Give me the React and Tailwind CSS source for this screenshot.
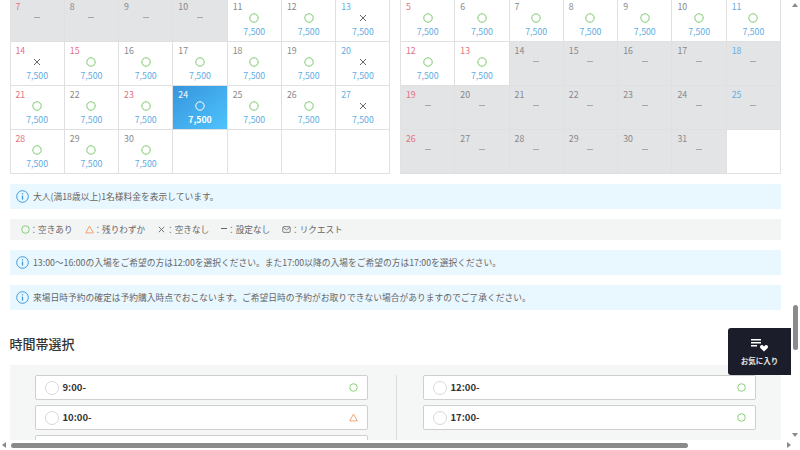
import React from 'react';

const jp = "font-['Noto_Sans_CJK_JP','Noto_Sans',sans-serif]";

const Circle = ({ color = '#7ccb6b', size = 10 }) => (
  <svg width={size} height={size} viewBox="0 0 10 10" fill="none" stroke={color} strokeWidth="1">
    <circle cx="5" cy="5" r="4.2" />
  </svg>
);

const Cross = ({ color = '#666', size = 10 }) => (
  <svg width={size} height={size} viewBox="0 0 10 10" fill="none" stroke={color} strokeWidth="1">
    <path d="M2 2l6 6M8 2l-6 6" />
  </svg>
);

const Dash = ({ color = '#a8a8ab', width = 6 }) => (
  <svg width={width} height="10" viewBox={`0 0 ${width} 10`} stroke={color} strokeWidth="1">
    <path d={`M0 4.5h${width}`} />
  </svg>
);

const Triangle = ({ color = '#ee9a66', size = 10 }) => (
  <svg width={size} height={size} viewBox="0 0 10 10" fill="none" stroke={color} strokeWidth="1">
    <path d="M5 1.2L9.2 8.8H.8z" />
  </svg>
);

const Mail = () => (
  <svg width="9" height="9" viewBox="0 0 11 10" fill="none" stroke="#666" strokeWidth="1">
    <rect x="1" y="1.5" width="9" height="7" rx="1" />
    <path d="M1.5 2.5l4 3 4-3" />
  </svg>
);

const Info = () => (
  <svg width="13" height="13" viewBox="0 0 13 13" fill="none" stroke="#3b9be0" strokeWidth="1" className="shrink-0">
    <circle cx="6.5" cy="6.5" r="5.8" />
    <path d="M6.5 5.6v4" strokeWidth="1.3" />
    <path d="M6.5 3.2v1.2" strokeWidth="1.3" />
  </svg>
);

const colorOf = { r: 'text-[#e5707f]', g: 'text-[#87878a]', b: 'text-[#62ade4]' };

const cell = (d, tone, kind) => ({ d, tone, kind });

const left = [
  cell(7, 'r', '-'), cell(8, 'g', '-'), cell(9, 'g', '-'), cell(10, 'g', '-'), cell(11, 'g', 'o'), cell(12, 'g', 'o'), cell(13, 'b', 'x'),
  cell(14, 'r', 'x'), cell(15, 'r', 'o'), cell(16, 'g', 'o'), cell(17, 'g', 'o'), cell(18, 'g', 'o'), cell(19, 'g', 'o'), cell(20, 'b', 'x'),
  cell(21, 'r', 'o'), cell(22, 'g', 'o'), cell(23, 'r', 'o'), cell(24, 'g', 's'), cell(25, 'g', 'o'), cell(26, 'g', 'o'), cell(27, 'b', 'x'),
  cell(28, 'r', 'o'), cell(29, 'g', 'o'), cell(30, 'g', 'o'), null, null, null, null,
];

const right = [
  cell(5, 'r', 'o'), cell(6, 'g', 'o'), cell(7, 'g', 'o'), cell(8, 'g', 'o'), cell(9, 'g', 'o'), cell(10, 'g', 'o'), cell(11, 'b', 'o'),
  cell(12, 'r', 'o'), cell(13, 'r', 'o'), cell(14, 'g', '-'), cell(15, 'g', '-'), cell(16, 'g', '-'), cell(17, 'g', '-'), cell(18, 'b', '-'),
  cell(19, 'r', '-'), cell(20, 'g', '-'), cell(21, 'g', '-'), cell(22, 'g', '-'), cell(23, 'g', '-'), cell(24, 'g', '-'), cell(25, 'b', '-'),
  cell(26, 'r', '-'), cell(27, 'g', '-'), cell(28, 'g', '-'), cell(29, 'g', '-'), cell(30, 'g', '-'), cell(31, 'g', '-'), null,
];

const DayCell = ({ item }) => {
  if (!item) return <div className="h-[44px] border-r border-b border-[#e2e2e2] bg-white" />;
  const { d, tone, kind } = item;
  const selected = kind === 's';
  const off = kind === '-';
  return (
    <div
      className={`h-[44px] border-r border-b border-[#e0e0e2] flex flex-col pt-[2px] ${
        selected ? 'bg-linear-to-br from-[#3795dc] to-[#4ec3fd]' : off ? 'bg-[#e3e4e6]' : 'bg-white'
      }`}
    >
      <div className={`h-[13px] pl-[5px] text-[8.75px] leading-[13px] ${selected ? 'text-white' : colorOf[tone]}`}>{d}</div>
      <div className="h-[10px] flex justify-center">
        {kind === 'o' && <Circle />}
        {kind === 's' && <Circle color="#fff" />}
        {kind === 'x' && <Cross />}
        {kind === '-' && <Dash />}
      </div>
      {!off && (
        <div className={`mt-[3px] h-[12px] text-center text-[8.75px] leading-[12px] ${selected ? 'text-white font-bold' : 'text-[#62ade4]'}`}>
          7,500
        </div>
      )}
    </div>
  );
};

const Calendar = ({ days }) => (
  <div className="w-[381px] grid grid-cols-7 border-l border-[#e2e2e2]">
    {days.map((item, i) => (
      <DayCell key={i} item={item} />
    ))}
  </div>
);

const Notice = ({ children, className = '' }) => (
  <div className={`h-[25px] bg-[#e9f7fe] pl-[6.5px] flex items-center gap-[4px] text-[8.75px] text-[#666] ${className}`}>
    <Info />
    <span>{children}</span>
  </div>
);

const LegendItem = ({ icon, label }) => (
  <div className="flex items-center">
    {icon}
    <span>：{label}</span>
  </div>
);

const TimeSlot = ({ label, status }) => (
  <div className="h-[25px] shrink-0 bg-white border border-[#cfcfcf] rounded-[2px] flex items-center pl-[9px] pr-[9px]">
    <span className="w-[14px] h-[14px] rounded-full border border-[#d8d8d8] bg-white mr-[4px]" />
    <span className="flex-1 text-[9.5px] font-bold text-[#333]">{label}</span>
    {status === 'o' ? <Circle size={9} /> : <Triangle size={9} />}
  </div>
);

const App = () => {
  return (
    <div className={`relative w-[800px] h-[450px] overflow-hidden bg-white flex flex-col ${jp}`}>
      <div className="flex h-[440px]">
        <div className="w-[790px] h-[440px] overflow-hidden pl-[9.5px] pr-[9px]">
          <div className="flex gap-[9.5px] -mt-[2px]">
            <Calendar days={left} />
            <Calendar days={right} />
          </div>

          <Notice className="mt-[10px]">大人(満18歳以上)1名様料金を表示しています。</Notice>

          <div className="mt-[10px] h-[21px] bg-[#f3f4f4] pl-[11px] flex items-center gap-[12px] text-[8.6px] text-[#666]">
            <LegendItem icon={<Circle size={9} />} label="空きあり" />
            <LegendItem icon={<Triangle size={9} />} label="残りわずか" />
            <LegendItem icon={<Cross size={9} />} label="空きなし" />
            <LegendItem icon={<Dash color="#666" width={6} />} label="設定なし" />
            <LegendItem icon={<Mail />} label="リクエスト" />
          </div>

          <Notice className="mt-[10px]">13:00～16:00の入場をご希望の方は12:00を選択ください。また17:00以降の入場をご希望の方は17:00を選択ください。</Notice>
          <Notice className="mt-[10px]">来場日時予約の確定は予約購入時点でおこないます。ご希望日時の予約がお取りできない場合がありますのでご了承ください。</Notice>

          <h2 className="mt-[24px] h-[20px] leading-[20px] text-[13px] font-medium text-[#333]">時間帯選択</h2>

          <div className="mt-[11px] bg-[#f5f7f7] h-[75px] overflow-hidden flex pt-[10px] pl-[25px] pr-[25px]">
            <div className="w-[333px] flex flex-col gap-[5px]">
              <TimeSlot label="9:00-" status="o" />
              <TimeSlot label="10:00-" status="t" />
              <TimeSlot label="" status="o" />
            </div>
            <div className="w-px h-[80px] bg-[#dddddd] ml-[28px] mr-[26px]" />
            <div className="w-[333px] flex flex-col gap-[5px]">
              <TimeSlot label="12:00-" status="o" />
              <TimeSlot label="17:00-" status="o" />
            </div>
          </div>
        </div>

        {/* vertical scrollbar */}
        <div className="w-[10px] h-[440px] bg-white flex flex-col items-center py-[3px]">
          <span className="w-0 h-0 border-x-[3px] border-x-transparent border-b-[4px] border-b-[#8a8a8a]" />
          <span className="mt-[298px] w-[5px] h-[45px] rounded-full bg-[#8a8a8a]" />
          <span className="mt-auto w-0 h-0 border-x-[3px] border-x-transparent border-t-[4px] border-t-[#8a8a8a]" />
        </div>
      </div>

      {/* horizontal scrollbar */}
      <div className="h-[10px] bg-white flex items-center pl-[2px] pr-[9px]">
        <span className="w-0 h-0 border-y-[3px] border-y-transparent border-r-[4px] border-r-[#8a8a8a]" />
        <span className="ml-[5px] w-[677px] h-[5px] rounded-full bg-[#8a8a8a]" />
        <span className="ml-auto w-0 h-0 border-y-[3px] border-y-transparent border-l-[4px] border-l-[#8a8a8a]" />
      </div>

      {/* favourites button */}
      <div className="absolute left-[728px] top-[328px] w-[63px] h-[47px] rounded-l-[3px] bg-[#1b1e2a] flex flex-col items-center pt-[11px] text-white">
        <svg width="18" height="13" viewBox="0 0 18 13" fill="white">
          <path d="M0 0h10v1.4H0zM0 3h10v1.4H0zM0 6h6v1.4H0z" />
          <path d="M13 12.5l-3.4-3.3c-1.7-1.8.8-4.2 2.4-2.6l1 1 1-1c1.6-1.6 4.1.8 2.4 2.6z" />
        </svg>
        <span className="mt-[3px] text-[7.5px] font-bold leading-[12px] text-[#e6e6e6]">お気に入り</span>
      </div>
    </div>
  );
};

export default App;
